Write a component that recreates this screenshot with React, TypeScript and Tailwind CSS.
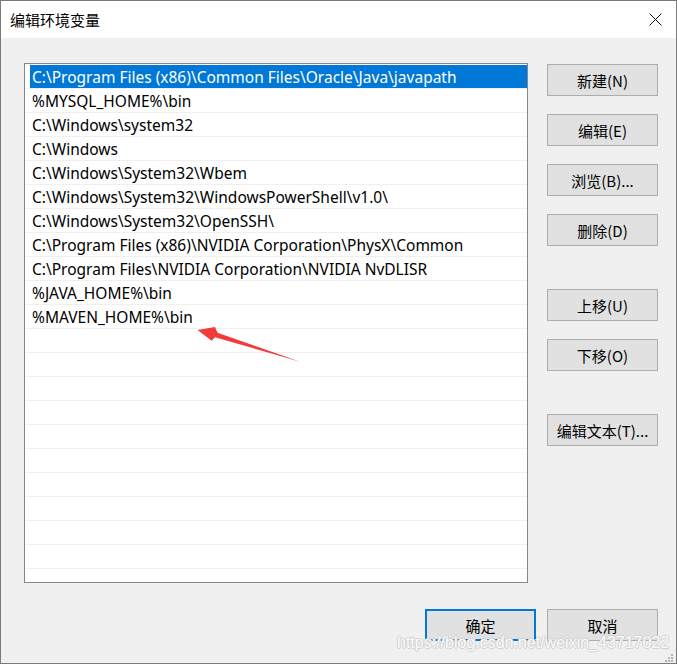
import React from "react";

const rows = [
  "C:\\Program Files (x86)\\Common Files\\Oracle\\Java\\javapath",
  "%MYSQL_HOME%\\bin",
  "C:\\Windows\\system32",
  "C:\\Windows",
  "C:\\Windows\\System32\\Wbem",
  "C:\\Windows\\System32\\WindowsPowerShell\\v1.0\\",
  "C:\\Windows\\System32\\OpenSSH\\",
  "C:\\Program Files (x86)\\NVIDIA Corporation\\PhysX\\Common",
  "C:\\Program Files\\NVIDIA Corporation\\NVIDIA NvDLISR",
  "%JAVA_HOME%\\bin",
  "%MAVEN_HOME%\\bin",
];

const allRows = [...rows, ...Array(11).fill("")];

function SideButton({ label }: { label: string }) {
  return (
    <button className="w-[111px] h-[32px] bg-[#e1e1e1] border border-[#adadad] text-[15px] text-black flex items-center justify-center leading-none">
      {label}
    </button>
  );
}

export default function App() {
  return (
    <div
      className="relative w-[677px] h-[664px] border border-[#7a7a7a] bg-[#f0f0f0] flex flex-col overflow-hidden text-black"
      style={{ fontFamily: '"Noto Sans", "Noto Sans CJK SC", sans-serif' }}
    >
      {/* title bar */}
      <div className="h-[37px] bg-white flex items-center justify-between pl-[9px] pr-[14px] shrink-0">
        <span className="text-[15px] leading-none" style={{ fontFamily: '"Noto Sans CJK SC", sans-serif' }}>
          编辑环境变量
        </span>
        <svg width="13" height="13" viewBox="0 0 13 13" className="block">
          <path d="M0.5 0.5 L12.5 12.5 M12.5 0.5 L0.5 12.5" stroke="#111" strokeWidth="1" fill="none" />
        </svg>
      </div>

      {/* body */}
      <div className="flex flex-col pl-[23px] pt-[25px]">
        <div className="flex gap-[19px]">
          <div className="w-[504px] h-[520px] bg-white border border-[#828790] pt-[1px] pl-[1px] overflow-hidden">
            {allRows.map((r, i) =>
              i === 0 ? (
                <div key={i} className="h-[24px] border-b border-[#f0f0f0] pl-[4px]">
                  <div className="h-[23px] bg-[#0078d7] text-white text-[15.5px] leading-[25px] pl-[2px] whitespace-nowrap">
                    {r}
                  </div>
                </div>
              ) : (
                <div
                  key={i}
                  className="h-[24px] border-b border-[#f0f0f0] pl-[6px] text-[15.5px] leading-[25px] whitespace-nowrap"
                >
                  {r}
                </div>
              )
            )}
          </div>

          <div className="flex flex-col pt-[1px]" style={{ fontFamily: '"Noto Sans CJK SC", sans-serif' }}>
            <div className="flex flex-col gap-[18px]">
              <SideButton label="新建(N)" />
              <SideButton label="编辑(E)" />
              <SideButton label="浏览(B)..." />
              <SideButton label="删除(D)" />
            </div>
            <div className="flex flex-col gap-[18px] mt-[43px]">
              <SideButton label="上移(U)" />
              <SideButton label="下移(O)" />
            </div>
            <div className="mt-[43px]">
              <SideButton label="编辑文本(T)..." />
            </div>
          </div>
        </div>

        <div
          className="w-[634px] flex justify-end gap-[11px] mt-[26px]"
          style={{ fontFamily: '"Noto Sans CJK SC", sans-serif' }}
        >
          <button className="w-[111px] h-[32px] bg-[#e1e1e1] border-2 border-[#0078d7] text-[15px] flex items-center justify-center leading-none">
            确定
          </button>
          <button className="w-[111px] h-[32px] bg-[#e1e1e1] border border-[#adadad] text-[15px] flex items-center justify-center leading-none">
            取消
          </button>
        </div>
      </div>

      {/* red annotation arrow */}
      <svg className="absolute top-[-1px] left-[-1px] pointer-events-none" width="677" height="664" viewBox="0 0 677 664">
        <polygon
          points="197.5,330 215,327 217.5,332.7 300,361.7 215,337.3 211.7,340.7"
          fill="#f23b3b"
        />
        {/* resize grip */}
        <g fill="#b4b4b4">
          <rect x="671" y="654" width="2" height="2" />
          <rect x="668" y="657" width="2" height="2" />
          <rect x="671" y="657" width="2" height="2" />
          <rect x="665" y="660" width="2" height="2" />
          <rect x="668" y="660" width="2" height="2" />
          <rect x="671" y="660" width="2" height="2" />
        </g>
      </svg>

      {/* watermark */}
      <div
        className="absolute left-[396px] top-[633px] text-[16px] leading-[18px] whitespace-nowrap text-[#fafafa] pointer-events-none [text-shadow:1px_0_0_#d2d2d2,-1px_0_0_#d2d2d2,0_1px_0_#d2d2d2,0_-1px_0_#d2d2d2]"
        style={{ fontFamily: '"Liberation Sans", Arial, sans-serif' }}
      >
        https://blog.csdn.net/weixin_43717022
      </div>
    </div>
  );
}
